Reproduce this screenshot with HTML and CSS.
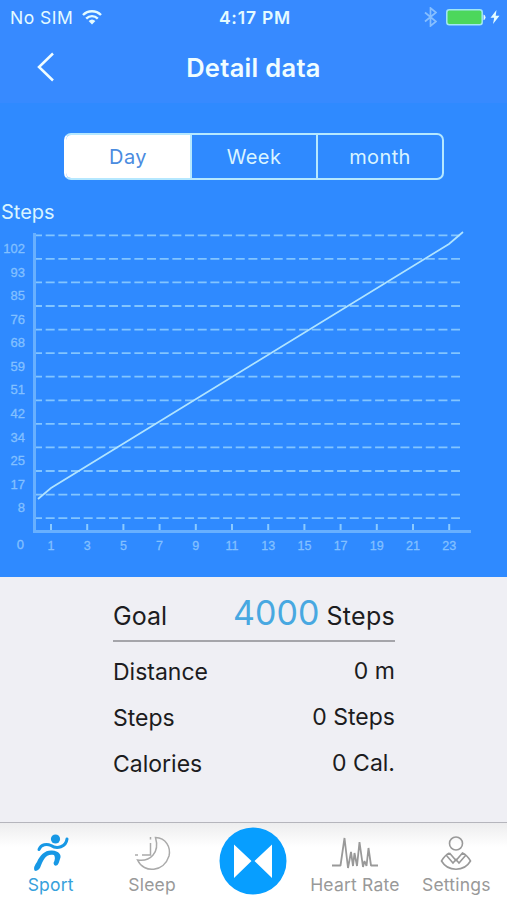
FILE: index.html
```html
<!DOCTYPE html>
<html lang="en">

<head>
    <meta charset="UTF-8">
    <meta name="viewport" content="width=device-width, initial-scale=1.0">
    <title>Detail data</title>
    <link rel="stylesheet" href="styles.css">
</head>

<body>
    <header class="header">
        <div class="status-bar">
            <div class="carrier">
                <span>No SIM</span>
                <svg width="20" height="15" viewBox="0 0 20 15" fill="none" stroke="#e4fbff" stroke-width="2.4">
                    <path d="M1 5C6 0 14 0 19 5M4.200 8.600C7.500 5.300 12.500 5.300 15.800 8.600"/>
                    <path d="M6.600 11Q10 8 13.400 11L10 14.500Z" fill="#e4fbff" stroke="none"/>
                </svg>
            </div>
            <span class="time">4:17 PM</span>
            <div class="power">
                <svg width="13" height="20" viewBox="0 0 13 20" fill="none" stroke="#87bfff" stroke-width="1.700">
                    <path d="M1 5.500L12 14.500L6.500 19V1L12 5.500L1 14.500"/>
                </svg>
                <svg class="battery" width="40" height="17" viewBox="0 0 40 17">
                    <rect x=".8" y=".8" width="35.400" height="15" rx="2.500" fill="#4cd75c" stroke="#a2e7f5" stroke-width="1.500"/>
                    <path d="M37.500 5.500Q39.500 6 39.500 8.300T37.500 11.200Z" fill="#e4fbff"/>
                </svg>
                <svg width="10" height="14" viewBox="0 0 10 14">
                    <path d="M6.500 0L.5 7.800H4.200L3 14L9.500 5.700H5.700Z" fill="#e4fbff"/>
                </svg>
            </div>
        </div>
        <div class="nav-bar">
            <svg class="back" width="18" height="30" viewBox="0 0 18 30">
                <path d="M16 1.500L2 15L16 28.500" fill="none" stroke="#f0fdff" stroke-width="2.500"/>
            </svg>
            <h1>Detail data</h1>
        </div>
    </header>

    <section class="chart-section">
        <div class="tabs">
            <button type="button" class="tab active">Day</button>
            <button type="button" class="tab">Week</button>
            <button type="button" class="tab">month</button>
        </div>
        <div class="chart-title">Steps</div>
        <svg class="chart" width="507" height="353" viewBox="0 0 507 353">
            <g id="grid" class="grid"></g>
            <path class="axis" d="M34.500 9V308.500M33 307.500H471"/>
            <g id="ticks" class="ticks"></g>
            <g id="y_labels" class="y-labels"></g>
            <g id="x_labels" class="x-labels"></g>
            <polyline class="line" points="38,275 51,264 449,20 463,8"/>
        </svg>
    </section>

    <main class="summary">
        <div class="goal">
            <span>Goal</span>
            <span><span class="goal-value">4000</span> <span class="goal-unit">Steps</span></span>
        </div>
        <div class="row"><span>Distance</span><span class="value">0 m</span></div>
        <div class="row"><span>Steps</span><span class="value">0 Steps</span></div>
        <div class="row"><span>Calories</span><span class="value">0 Cal.</span></div>
    </main>

    <nav class="tab-bar">
        <a class="item selected">
            <svg width="40" height="40" viewBox="0 0 40 40" fill="none" stroke="#1798e5" stroke-linecap="round">
                <circle cx="24.500" cy="6" r="4.600" fill="#1798e5" stroke="none"/>
                <path d="M8 16.500C10 11 16 10.500 20 12.500C26 16.500 35 14 36 6" stroke-width="3"/>
                <path d="M3.500 37.500Q2 34 6 29C9 22 14 17 21 17.500C28 18 31 22 29 26Q28 30 26.500 32Q23 34 22.500 30Q25 25 23 22C15 20 12 27 9 35Q6 39 3.500 37.500Z" fill="#1798e5" stroke="none"/>
            </svg>
            <span>Sport</span>
        </a>
        <a class="item">
            <svg width="40" height="40" viewBox="0 0 40 40" fill="none" stroke="#aaa" stroke-width="1.500">
                <path d="M23.500 4.500C34 5 39 14 37 23C32 39 12 41 5.500 27C18 29 28 20 23.500 4.500Z"/>
                <path d="M18.500 10V22H10M18.500 4V6.500M3 22H6"/>
            </svg>
            <span>Sleep</span>
        </a>
        <a class="item center">
            <svg width="68" height="68" viewBox="0 0 68 68">
                <circle cx="34" cy="34" r="33.500" fill="#079eff"/>
                <path d="M15 17.500L32.500 34L15 51ZM53 17.500L35.500 34L53 51Z" fill="#fff"/>
            </svg>
        </a>
        <a class="item">
            <svg width="48" height="40" viewBox="0 0 48 40" fill="none" stroke="#999" stroke-width="1.800" stroke-linejoin="bevel">
                <path d="M1 32.500H9.500L13.500 5L17 35L20 19L22 33L23.500 20L26 33L28.500 9L32 34L33.500 28L35.500 33L37.500 15L40 32.500H47"/>
            </svg>
            <span>Heart Rate</span>
        </a>
        <a class="item">
            <svg width="40" height="40" viewBox="0 0 40 40" fill="none" stroke="#999" stroke-width="1.600">
                <circle cx="20" cy="10.500" r="6.500"/>
                <path d="M13.500 20Q9 22 5.500 28C12 39 28 39 34.500 28Q31 22 26.500 20L20 27.500L13.500 20M10.500 22.500L17 30L20 26.500L23 30L29.500 22.500"/>
            </svg>
            <span>Settings</span>
        </a>
    </nav>

    <script>
        var steps = [102, 93, 85, 76, 68, 59, 51, 42, 34, 25, 17, 8];
        var gap = 23.57;
        var grid = '';
        var yLabels = '';
        var ticks = '';
        var xLabels = '';

        for (var i = 0; i <= steps.length; i++) {
            var y = 11.3 + i * gap;
            grid += `<path d="M33 ${y}H460"/>`;
        }

        for (var i = 0; i < steps.length; i++) {
            yLabels += `<text x="25" y="${29 + i * gap}">${steps[i]}</text>`;
        }
        yLabels += '<text x="24" y="324.5">0</text>';

        for (var hour = 1; hour <= 23; hour += 2) {
            var x = 51 + (hour - 1) * 18.1;
            ticks += `<path d="M${x} 300V306"/>`;
            xLabels += `<text x="${x}" y="325.5">${hour}</text>`;
        }

        document.getElementById('grid').innerHTML = grid;
        document.getElementById('y_labels').innerHTML = yLabels;
        document.getElementById('ticks').innerHTML = ticks;
        document.getElementById('x_labels').innerHTML = xLabels;
    </script>
</body>

</html>
```
FILE: styles.css
```css
body {
    font-family: Inter, "Liberation Sans", sans-serif;
    margin: 0;
    height: 900px;
    display: flex;
    flex-direction: column;
    background-color: #efeff4;
    overflow: hidden;
}

svg {
    display: block;
    flex-shrink: 0;
}

.header {
    height: 103px;
    background-color: #378aff;
    color: #f0fdff;
}

.status-bar {
    display: grid;
    grid-template-columns: 1fr auto 1fr;
    align-items: center;
    height: 34px;
    padding: 0 7px 0 10px;
    font-size: 17.5px;
    color: #e4fbff;
}

.carrier {
    display: flex;
    align-items: center;
    gap: 9px;
    letter-spacing: 0.5px;
}

.time {
    font-weight: 600;
    letter-spacing: 0.8px;
}

.power {
    display: flex;
    justify-content: flex-end;
    align-items: center;
}

.battery {
    margin: 0 4px 0 9px;
}

.nav-bar {
    display: grid;
    grid-template-columns: 60px 1fr 60px;
    align-items: center;
    height: 66px;
}

.back {
    margin-left: 37px;
}

h1 {
    margin: 0;
    font-size: 25.5px;
    font-weight: 600;
    letter-spacing: 0.3px;
    text-align: center;
}

.chart-section {
    display: flex;
    flex-direction: column;
    height: 474px;
    background-color: #2f8aff;
}

.tabs {
    display: flex;
    box-sizing: border-box;
    width: 380px;
    height: 47px;
    margin: 30px 0 0 64px;
    border: 2px solid #b5e8ff;
    border-left-color: #fff;
    border-radius: 7px;
    overflow: hidden;
}

.tab {
    flex: 1;
    padding: 0;
    border: none;
    border-left: 2px solid #b5e8ff;
    background: none;
    color: #d9f4ff;
    font-family: inherit;
    font-size: 20px;
    letter-spacing: 0.4px;
}

.tab.active {
    border-left: none;
    background-color: #fff;
    color: #4b8cdf;
}

.chart-title {
    height: 44px;
    padding-left: 1px;
    line-height: 64px;
    font-size: 20px;
    color: #d9f4ff;
}

.chart {
    font-family: "Liberation Sans", Arial, sans-serif;
    font-size: 13px;
    fill: #83c0ff;
}

.grid {
    stroke: #83c5ff;
    stroke-width: 1.8;
    stroke-dasharray: 9 3.67;
}

.axis {
    fill: none;
    stroke: #68b0ff;
    stroke-width: 3;
}

.ticks {
    stroke: #8bcaff;
    stroke-width: 2;
}

.y-labels,
.x-labels {
    stroke: #83c0ff;
    stroke-width: 0.3;
}

.y-labels {
    text-anchor: end;
}

.x-labels {
    text-anchor: middle;
    font-size: 12.5px;
}

.line {
    fill: none;
    stroke: #b0e4ff;
    stroke-width: 1.7;
}

.summary {
    width: 282px;
    height: 245px;
    margin-left: 113px;
    color: #1c1c20;
    font-size: 23px;
}

.goal {
    display: flex;
    justify-content: space-between;
    align-items: baseline;
    box-sizing: border-box;
    height: 65px;
    padding-top: 15px;
    margin-bottom: 7px;
    border-bottom: 2px solid #a5a5aa;
    font-size: 25px;
}

.goal-value {
    font-size: 34px;
    color: #48a8e1;
}

.goal-unit {
    letter-spacing: 0.3px;
}

.row {
    display: flex;
    justify-content: space-between;
    align-items: center;
    height: 46px;
}

.value {
    margin-bottom: 3px;
}

.tab-bar {
    display: grid;
    grid-template-columns: repeat(5, 1fr);
    box-sizing: border-box;
    height: 78px;
    border-top: 1px solid #b5b5bc;
    background: linear-gradient(#ededee, #fff 24px);
}

.item {
    display: flex;
    flex-direction: column;
    align-items: center;
    padding-top: 10px;
    font-size: 17.5px;
    letter-spacing: 0.2px;
    color: #999;
    white-space: nowrap;
}

.item span {
    line-height: 23px;
}

.item.selected {
    color: #36a1dc;
}

.item.center {
    padding-top: 4px;
}
```
